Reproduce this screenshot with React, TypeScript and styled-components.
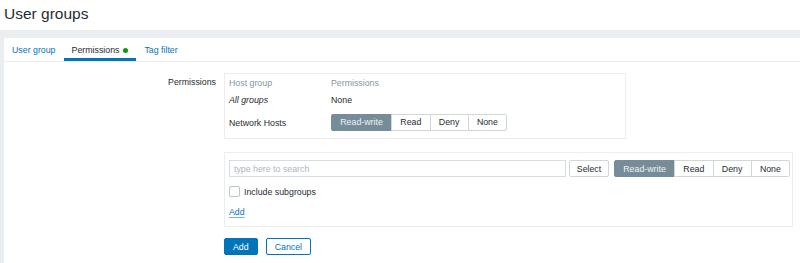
import styled, { createGlobalStyle } from "styled-components";

const GlobalStyle = createGlobalStyle`
  html, body, #root {
    height: 100%;
  }
  body {
    margin: 0;
    background: #ffffff;
    font-family: "Liberation Sans", Arial, sans-serif;
    font-size: 8.8px;
    color: #1f2c33;
  }
`;

const Page = styled.div`
  display: flex;
  flex-direction: column;
  height: 100%;
`;

const Header = styled.header`
  height: 30px;
  padding: 5px 0 0 4px;
  box-sizing: border-box;
  flex: none;
`;

const Title = styled.h1`
  margin: 0;
  font-size: 15.5px;
  font-weight: normal;
  color: #1f2c33;
  line-height: normal;
`;

const Main = styled.main`
  flex: 1;
  display: flex;
  background: #ebeef0;
  padding: 8px 0 0 4px;
`;

const Panel = styled.section`
  flex: 1;
  background: #ffffff;
`;

const TabBar = styled.nav`
  display: flex;
  height: 23px;
  border-bottom: 1px solid #ebeef0;
`;

const Tab = styled.div<{ $active?: boolean }>`
  display: flex;
  align-items: center;
  gap: 4px;
  padding: 1px 8px 0;
  height: 22px;
  white-space: nowrap;
  color: ${(p) => (p.$active ? "#1f2c33" : "#0275b8")};
  box-shadow: ${(p) => (p.$active ? "inset 0 -3px 0 #0275b8" : "none")};
`;

const Dot = styled.span`
  width: 5px;
  height: 5px;
  border-radius: 50%;
  background: #0a9a0a;
`;

const Form = styled.div`
  display: grid;
  grid-template-columns: 212px auto;
  column-gap: 8px;
  row-gap: 13px;
  padding-top: 11px;
  align-items: start;
  justify-items: start;
`;

const Label = styled.div`
  justify-self: end;
  line-height: 13px;
  padding-top: 3px;
`;

const Spacer = styled.div``;

const Box = styled.div<{ $width: number }>`
  width: ${(p) => p.$width}px;
  box-sizing: border-box;
  border: 1px solid #ebeef0;
`;

const PermTable = styled.div`
  display: grid;
  grid-template-columns: 102px auto;
  grid-template-rows: 18px 16px auto;
  padding: 0 4px;
  align-items: center;
  line-height: 13px;
`;

const HeadCell = styled.div`
  color: #8297a2;
`;

const Cell = styled.div<{ $italic?: boolean; $pad?: boolean }>`
  font-style: ${(p) => (p.$italic ? "italic" : "normal")};
  padding: ${(p) => (p.$pad ? "6px 0 7px" : "0")};
`;

const Segments = styled.div`
  display: inline-flex;
  flex: none;
  height: 17px;
`;

const Segment = styled.span<{ $active?: boolean }>`
  display: flex;
  align-items: center;
  justify-content: center;
  padding: 0 8.25px;
  box-sizing: border-box;
  height: 17px;
  white-space: nowrap;
  border: 1px solid ${(p) => (p.$active ? "#768d99" : "#cfd7db")};
  margin-left: -1px;
  background: ${(p) => (p.$active ? "#768d99" : "#ffffff")};
  color: ${(p) => (p.$active ? "#eef1f3" : "#1f2c33")};
  &:first-child {
    margin-left: 0;
    border-radius: 2px 0 0 2px;
  }
  &:last-child {
    border-radius: 0 2px 2px 0;
  }
`;

const AddBox = styled.div`
  display: flex;
  flex-direction: column;
  padding: 7px 3px 7px 4px;
`;

const SearchRow = styled.div`
  display: flex;
  align-items: center;
`;

const Input = styled.div`
  flex: none;
  width: 337px;
  height: 17px;
  box-sizing: border-box;
  border: 1px solid #d5dde1;
  display: flex;
  align-items: center;
  padding-left: 4px;
  color: #aab8bf;
`;

const Button = styled.span<{ $primary?: boolean; $outline?: boolean }>`
  display: inline-flex;
  align-items: center;
  justify-content: center;
  flex: none;
  height: 17px;
  box-sizing: border-box;
  padding: 0 8px;
  border-radius: 2px;
  white-space: nowrap;
  border: 1px solid
    ${(p) => (p.$primary || p.$outline ? "#0275b8" : "#cfd7db")};
  background: ${(p) => (p.$primary ? "#0275b8" : "#ffffff")};
  color: ${(p) => (p.$primary ? "#ffffff" : p.$outline ? "#0275b8" : "#1f2c33")};
`;

const SelectButton = styled(Button)`
  margin: 0 5px 0 3px;
  width: 40px;
  padding: 0;
`;

const CheckRow = styled.div`
  display: flex;
  align-items: center;
  gap: 4px;
  margin-top: 9px;
  height: 11px;
`;

const Checkbox = styled.span`
  width: 11px;
  height: 11px;
  box-sizing: border-box;
  border: 1px solid #b9c6cc;
  border-radius: 2px;
`;

const Link = styled.a`
  align-self: flex-start;
  margin-top: 9px;
  line-height: 13px;
  color: #0275b8;
  text-decoration: underline;
  text-underline-offset: 2px;
  text-decoration-color: #7fb5d9;
`;

const Actions = styled.div`
  display: flex;
  gap: 8px;
  margin-top: -2px;
`;

const levels = ["Read-write", "Read", "Deny", "None"];

function Levels({ active }: { active: string }) {
  return (
    <Segments>
      {levels.map((l) => (
        <Segment key={l} $active={l === active}>
          {l}
        </Segment>
      ))}
    </Segments>
  );
}

function App() {
  return (
    <Page>
      <GlobalStyle />
      <Header>
        <Title>User groups</Title>
      </Header>
      <Main>
        <Panel>
          <TabBar>
            <Tab>User group</Tab>
            <Tab $active>
              Permissions <Dot />
            </Tab>
            <Tab>Tag filter</Tab>
          </TabBar>
          <Form>
            <Label>Permissions</Label>
            <Box $width={402}>
              <PermTable>
                <HeadCell>Host group</HeadCell>
                <HeadCell>Permissions</HeadCell>
                <Cell $italic>All groups</Cell>
                <Cell>None</Cell>
                <Cell>Network Hosts</Cell>
                <Cell $pad>
                  <Levels active="Read-write" />
                </Cell>
              </PermTable>
            </Box>
            <Spacer />
            <Box $width={569}>
              <AddBox>
                <SearchRow>
                  <Input>type here to search</Input>
                  <SelectButton>Select</SelectButton>
                  <Levels active="Read-write" />
                </SearchRow>
                <CheckRow>
                  <Checkbox />
                  Include subgroups
                </CheckRow>
                <Link>Add</Link>
              </AddBox>
            </Box>
            <Spacer />
            <Actions>
              <Button $primary>Add</Button>
              <Button $outline>Cancel</Button>
            </Actions>
          </Form>
        </Panel>
      </Main>
    </Page>
  );
}

export default App;
